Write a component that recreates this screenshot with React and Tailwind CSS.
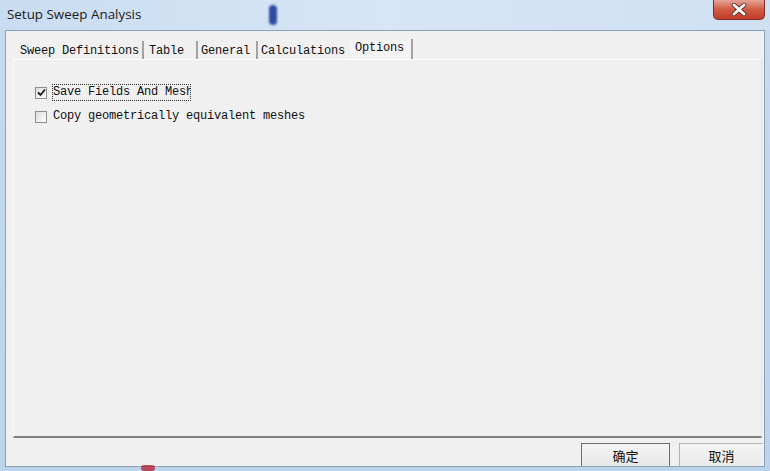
import { useState } from 'react';

const mono = { fontFamily: '"Liberation Mono", "DejaVu Sans Mono", monospace' };

const tabs = [
  { label: 'Sweep Definitions', w: 'w-[131px]', pad: 'pl-[7px]', sep: true },
  { label: 'Table ', w: 'w-[54px]', pad: 'pl-[5px]', sep: true },
  { label: 'General', w: 'w-[60px]', pad: 'pl-[3px]', sep: true },
  { label: 'Calculations', w: 'w-[92px]', pad: 'pl-[3px]', sep: false },
  { label: 'Options', w: 'w-[63px]', pad: 'pl-[5px]', sep: true },
];

function Checkbox({ checked }) {
  return (
    <span className="w-[12px] h-[12px] border border-[#8e8f8f] bg-gradient-to-br from-[#dcdcdc] to-[#ffffff] flex items-center justify-center shrink-0">
      {checked && (
        <svg width="9" height="9" viewBox="0 0 9 9">
          <path d="M1 4.5 L3.5 7 L8 1.5" stroke="#1a1a1a" strokeWidth="1.8" fill="none" />
        </svg>
      )}
    </span>
  );
}

export default function App() {
  const [active] = useState('Options');

  return (
    <div className="w-[770px] h-[471px] relative overflow-hidden bg-gradient-to-b from-[#c7dbf0] to-[#bcd3ec] flex flex-col">
      {/* desktop bleed-through */}
      <div className="absolute left-[269px] top-[5px] w-[8px] h-[20px] rounded-full bg-[#1f3c98] opacity-90 blur-[1px]" />
      <div className="absolute left-[141px] top-[465px] w-[14px] h-[6px] rounded-full bg-[#b0283a] opacity-80" />

      {/* Title bar */}
      <div className="h-[30px] flex items-center pl-[7px] pb-[1px] shrink-0 bg-gradient-to-r from-[#c9dcf1] via-[#d7e6f6] to-[#cfe0f3]">
        <span className="text-[13.4px] text-[#1b1b1b]" style={{ fontFamily: '"Open Sans", "Noto Sans", sans-serif' }}>
          Setup Sweep Analysis
        </span>
      </div>
      <div className="absolute top-0 left-[713px] w-[52px] h-[20px] rounded-b-[5px] border border-t-0 border-[#7b2e26] bg-gradient-to-b from-[#e4a395] via-[#cf5a45] to-[#c33b27] flex items-center justify-center">
        <svg width="18" height="13" viewBox="0 0 18 13">
          <path d="M4 2 L14 11 M14 2 L4 11" stroke="#6b2a22" strokeWidth="4.5" strokeLinecap="round" />
          <path d="M4 2 L14 11 M14 2 L4 11" stroke="#ffffff" strokeWidth="2.8" strokeLinecap="round" />
        </svg>
      </div>

      {/* Client area */}
      <div className="ml-[5px] w-[760px] h-[437px] border border-[#8ba0b9] bg-[#f0f0f0] flex flex-col pl-[7px] pt-[7px] overflow-hidden">
        {/* Tab strip */}
        <div className="h-[21px] flex items-end shrink-0" style={mono}>
          {tabs.map((t) => {
            const sel = t.label === active;
            return (
              <div
                key={t.label}
                className={`${t.w} ${t.pad} flex items-center text-[12px] tracking-[-0.2px] text-[#111] ${
                  t.sep ? 'border-r-2 border-r-[#a3a3a3]' : ''
                } ${sel ? 'h-[20px] pb-[2px] bg-[#f3f3f3]' : 'h-[18px] pt-[1px]'}`}
              >
                <span className="whitespace-pre">{t.label}</span>
              </div>
            );
          })}
        </div>

        {/* Tab panel */}
        <div className="w-[749px] h-[379px] shrink-0 border-t border-t-[#fcfcfc] border-l border-l-[#fafafa] border-r border-r-[#e3e3e3] border-b-2 border-b-[#808080] pt-[24px] pl-[21px] flex flex-col gap-[8px]" style={mono}>
          <div className="flex items-center gap-[5px]">
            <Checkbox checked />
            <span className="w-[139px] h-[17px] border border-dotted border-[#333] overflow-hidden whitespace-nowrap text-[12px] tracking-[-0.2px] leading-[15px] text-[#111]">
              Save Fields And Mesh
            </span>
          </div>
          <div className="flex items-center gap-[6px]">
            <Checkbox />
            <span className="text-[12px] tracking-[-0.2px] leading-[15px] text-[#111] whitespace-nowrap">
              Copy geometrically equivalent meshes
            </span>
          </div>
        </div>

        {/* Buttons */}
        <div className="flex justify-end gap-[9px] pt-[5px] pr-[1px]" style={{ fontFamily: '"Noto Sans CJK SC", sans-serif' }}>
          <div className="w-[89px] h-[28px] border border-[#6f6f6f] bg-gradient-to-b from-[#f4f4f4] to-[#e6e6e6] flex justify-center pt-[2px] text-[13px] text-[#111]">
            确定
          </div>
          <div className="w-[84px] h-[28px] border border-[#b2b2b2] border-r-0 bg-gradient-to-b from-[#f4f4f4] to-[#e9e9e9] flex justify-center pt-[2px] text-[13px] text-[#111]">
            取消
          </div>
        </div>
      </div>
    </div>
  );
}
